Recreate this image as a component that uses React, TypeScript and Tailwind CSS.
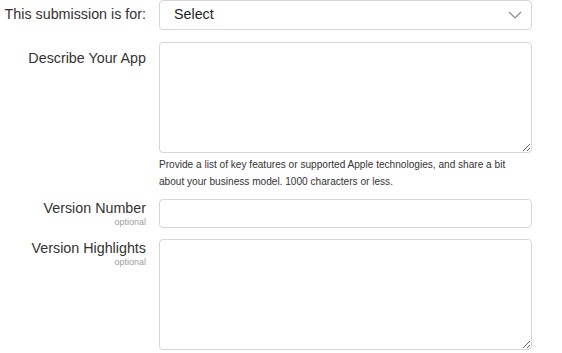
import React from "react";

const font = { fontFamily: "'Liberation Sans', Arial, sans-serif" };

export default function App() {
  return (
    <div className="w-[562px] h-[353px] bg-white overflow-hidden text-[#333]" style={font}>
      <div className="grid grid-cols-[146px_373px] gap-x-[13px]">
        {/* Row 1 */}
        <div className="h-[30px] flex items-center justify-end text-[14.3px] whitespace-nowrap">
          This submission is for:
        </div>
        <div className="relative h-[30px] border border-[#d6d6d6] rounded-[4px] flex items-center pl-[14px] text-[14.3px] text-[#1d1d1f]">
          Select
          <svg className="absolute right-[9px] top-[10px]" width="14" height="8" viewBox="0 0 14 8" fill="none">
            <path d="M1 1 L7 7 L13 1" stroke="#8a8a8a" strokeWidth="1.2" />
          </svg>
        </div>

        {/* Row 2 */}
        <div className="pt-[6px] text-right text-[14.3px] mt-[12px]">Describe Your App</div>
        <div className="mt-[12px]">
          <textarea className="block w-full h-[111px] border border-[#d6d6d6] rounded-[4px] resize-y outline-none" />
          <p className="mt-[3px] text-[10.1px] leading-[17px] text-[#333]">
            Provide a list of key features or supported Apple technologies, and share a bit
            <br />
            about your business model. 1000 characters or less.
          </p>
        </div>

        {/* Row 3 */}
        <div className="mt-[9px] text-right leading-none">
          <div className="text-[14.3px] pt-[2px]">Version Number</div>
          <div className="text-[9px] text-[#a0a0a0] mt-[3px]">optional</div>
        </div>
        <div className="mt-[9px]">
          <div className="h-[29px] border border-[#d6d6d6] rounded-[4px]" />
        </div>

        {/* Row 4 */}
        <div className="mt-[11px] text-right leading-none">
          <div className="text-[14.3px] pt-[2px]">Version Highlights</div>
          <div className="text-[9px] text-[#a0a0a0] mt-[3px]">optional</div>
        </div>
        <div className="mt-[11px]">
          <textarea className="block w-full h-[111px] border border-[#d6d6d6] rounded-[4px] resize-y outline-none" />
        </div>
      </div>
    </div>
  );
}
